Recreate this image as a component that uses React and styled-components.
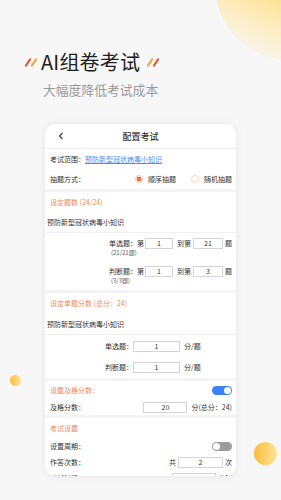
import React from "react";
import styled, { createGlobalStyle } from "styled-components";

const GlobalStyle = createGlobalStyle`
  html, body {
    margin: 0;
    padding: 0;
    background: #f7f7f7;
  }
  body {
    font-family: "Noto Sans CJK SC", "Noto Sans", sans-serif;
    color: #333;
  }
  * {
    box-sizing: border-box;
  }
`;

const ORANGE = "#f08a5d";

const Slashes = ({ colors }) => (
  <svg width="14" height="10" viewBox="0 0 14 10">
    <line x1="2" y1="8.5" x2="6" y2="2.5" stroke={colors[0]} strokeWidth="2.2" strokeLinecap="round" />
    <line x1="8" y1="8.5" x2="12" y2="2.5" stroke={colors[1]} strokeWidth="2.2" strokeLinecap="round" />
  </svg>
);

const Chevron = () => (
  <svg width="6" height="8" viewBox="0 0 6 8">
    <polyline points="4.5,1 1.5,4 4.5,7" fill="none" stroke="#333" strokeWidth="1.1" />
  </svg>
);

const App = () => {
  return (
    <Page>
      <GlobalStyle />
      {/* 装饰圆 */}
      <BigBlob />
      <Dot $size={11} $x={10} $y={375} />
      <Dot $size={23} $x={254} $y={442} />

      {/* 标题 */}
      <TitleRow>
        <Slashes colors={["#ef5030", "#f8a13a"]} />
        <Title>AI组卷考试</Title>
        <Slashes colors={["#f8a13a", "#ef5030"]} />
      </TitleRow>
      <Subtitle>大幅度降低考试成本</Subtitle>

      {/* 手机卡片 */}
      <Card>
        <Header>
          <BackBtn>
            <Chevron />
          </BackBtn>
          <HeaderTitle>配置考试</HeaderTitle>
          <span />
        </Header>

        <InfoRow>
          考试范围：<LinkText>预防新型冠状病毒小知识</LinkText>
        </InfoRow>
        <InfoRow>
          抽题方式：
          <RadioGroup>
            <RadioItem>
              <Radio $checked />
              顺序抽题
            </RadioItem>
            <RadioItem>
              <Radio />
              随机抽题
            </RadioItem>
          </RadioGroup>
        </InfoRow>

        {/* 设定题数 */}
        <Section>
          <SectionTitle>设定题数 (24/24)</SectionTitle>
          <DescRow>预防新型冠状病毒小知识</DescRow>
          <QuestionList>
            <QuestionRow>
              <LabelBlock>
                <MainLabel>单选题：第</MainLabel>
                <SubLabel>(21/21题)</SubLabel>
              </LabelBlock>
              <Field $w={28}>1</Field>
              <Gap $ml={4} $mr={2}>到第</Gap>
              <Field $w={30}>21</Field>
              <Gap $ml={2}>题</Gap>
            </QuestionRow>
            <QuestionRow>
              <LabelBlock>
                <MainLabel>判断题：第</MainLabel>
                <SubLabel>(3/3题)</SubLabel>
              </LabelBlock>
              <Field $w={28}>1</Field>
              <Gap $ml={4} $mr={2}>到第</Gap>
              <Field $w={30}>3</Field>
              <Gap $ml={2}>题</Gap>
            </QuestionRow>
          </QuestionList>
        </Section>

        {/* 设定单题分数 */}
        <Section>
          <SectionTitle>设定单题分数 (总分：24)</SectionTitle>
          <DescRow $h={21}>预防新型冠状病毒小知识</DescRow>
          <ScoreList>
            <ScoreRow>
              <ScoreLabel>单选题：</ScoreLabel>
              <Field $w={47}>1</Field>
              <Unit $ml={4}>分/题</Unit>
            </ScoreRow>
            <ScoreRow>
              <ScoreLabel>判断题：</ScoreLabel>
              <Field $w={47}>1</Field>
              <Unit $ml={4}>分/题</Unit>
            </ScoreRow>
          </ScoreList>
        </Section>

        {/* 及格分数 */}
        <Section>
          <SectionTitle $h={18}>
            设置及格分数：
            <Toggle $on />
          </SectionTitle>
          <SettingRow>
            及格分数：
            <Push>
              <Field $w={44}>20</Field>
              <Unit $ml={4}>分(总分：24)</Unit>
            </Push>
          </SettingRow>
        </Section>

        {/* 考试设置 */}
        <Section>
          <SectionTitle>考试设置</SectionTitle>
          <SettingRow>
            设置周期：
            <Toggle />
          </SettingRow>
          <SettingRow>
            作答次数：
            <Push>
              <Unit $mr={2}>共</Unit>
              <Field $w={45}>2</Field>
              <Unit $ml={2}>次</Unit>
            </Push>
          </SettingRow>
          <SettingRow>
            考试时间：
            <Push>
              <Field $w={44}>60</Field>
              <Unit $ml={2}>分钟</Unit>
            </Push>
          </SettingRow>
        </Section>
      </Card>
    </Page>
  );
};

const Page = styled.div`
  position: relative;
  width: 281px;
  height: 500px;
  overflow: hidden;
  background: #f7f7f7;
  padding-top: 50px;
`;

const BigBlob = styled.div`
  position: absolute;
  left: 215px;
  top: -90px;
  width: 150px;
  height: 150px;
  border-radius: 50%;
  background: linear-gradient(205deg, #fcd050 0%, #fdd668 45%, #fde7a8 65%, #faf3e3 85%, #f8f6f2 100%);
`;

const Dot = styled.div`
  position: absolute;
  left: ${(p) => p.$x}px;
  top: ${(p) => p.$y}px;
  width: ${(p) => p.$size}px;
  height: ${(p) => p.$size}px;
  border-radius: 50%;
  background: linear-gradient(90deg, #fbbd3c, #fde39a);
`;

const TitleRow = styled.div`
  position: relative;
  display: flex;
  align-items: center;
  height: 24px;
  padding-left: 24px;
  gap: 3px;
  & > svg:last-child {
    margin-left: 3px;
  }
`;

const Title = styled.div`
  font-size: 20px;
  line-height: 24px;
  color: #222;
  letter-spacing: 0.2px;
`;

const Subtitle = styled.div`
  position: relative;
  margin-top: 8px;
  padding-left: 43px;
  font-size: 12.8px;
  line-height: 16px;
  color: #9a9a9a;
`;

const Card = styled.div`
  position: relative;
  width: 191px;
  height: 352px;
  margin: 26px auto 0;
  background: #fff;
  border-radius: 10px;
  overflow: hidden;
  box-shadow: 0 0 8px rgba(0, 0, 0, 0.07);
  font-size: 7px;
  color: #333;
`;

const Header = styled.div`
  display: grid;
  grid-template-columns: 30px 1fr 30px;
  align-items: center;
  height: 25px;
  border-bottom: 1px solid #efefef;
`;

const BackBtn = styled.div`
  display: flex;
  padding-left: 13px;
`;

const HeaderTitle = styled.div`
  text-align: center;
  font-size: 9px;
  font-weight: 500;
  color: #333;
`;

const InfoRow = styled.div`
  display: flex;
  align-items: center;
  height: 20px;
  padding: 0 4px 0 5px;
  line-height: 10px;
`;

const LinkText = styled.span`
  color: #4a8ef2;
  text-decoration: underline;
  text-underline-offset: 1px;
`;

const RadioGroup = styled.div`
  display: flex;
  margin-left: auto;
  gap: 15px;
`;

const RadioItem = styled.div`
  display: flex;
  align-items: center;
  gap: 5px;
`;

const Radio = styled.span`
  width: 8px;
  height: 8px;
  border-radius: 50%;
  border: 1px solid ${(p) => (p.$checked ? "#f9c4ad" : "#f7d3c2")};
  background: ${(p) =>
    p.$checked ? "radial-gradient(circle, #f2703e 0 2.3px, #fff 2.6px)" : "#fff"};
`;

const Section = styled.div`
  border-top: 3px solid #f4f4f4;
`;

const SectionTitle = styled.div`
  display: flex;
  align-items: center;
  justify-content: space-between;
  height: ${(p) => p.$h || 20}px;
  padding: 0 4px 0 5px;
  color: ${ORANGE};
  line-height: 10px;
`;

const DescRow = styled.div`
  display: flex;
  align-items: center;
  height: ${(p) => p.$h || 20}px;
  padding-left: 2px;
  border-bottom: 1px solid #f0f0f0;
  line-height: 10px;
  box-sizing: content-box;
`;

const QuestionList = styled.div`
  display: flex;
  flex-direction: column;
  align-items: flex-end;
  gap: 9px;
  padding: 5px 4px 5px 0;
`;

const QuestionRow = styled.div`
  display: flex;
  align-items: flex-start;
`;

const LabelBlock = styled.div`
  display: flex;
  flex-direction: column;
  margin-right: 1px;
`;

const MainLabel = styled.div`
  height: 11px;
  line-height: 11px;
  word-spacing: 2px;
`;

const SubLabel = styled.div`
  height: 8px;
  line-height: 8px;
  font-size: 6px;
  color: #555;
  padding-left: 2px;
`;

const Field = styled.div`
  width: ${(p) => p.$w}px;
  height: 11px;
  border: 1px solid #d4d4d4;
  background: #fff;
  text-align: center;
  line-height: 9px;
  font-size: 7px;
  color: #333;
`;

const Gap = styled.span`
  height: 11px;
  line-height: 11px;
  margin-left: ${(p) => p.$ml || 0}px;
  margin-right: ${(p) => p.$mr || 0}px;
`;

const ScoreList = styled.div`
  display: flex;
  flex-direction: column;
  gap: 9px;
  padding: 5px 0 5px;
`;

const ScoreRow = styled.div`
  display: flex;
  align-items: center;
  height: 12px;
`;

const ScoreLabel = styled.span`
  width: 88px;
  text-align: right;
`;

const Unit = styled.span`
  margin-left: ${(p) => p.$ml || 0}px;
  margin-right: ${(p) => p.$mr || 0}px;
  line-height: 10px;
`;

const SettingRow = styled.div`
  display: flex;
  align-items: center;
  height: 16px;
  padding: 0 4px 0 5px;
  line-height: 10px;
`;

const Push = styled.div`
  display: flex;
  align-items: center;
  margin-left: auto;
`;

const Toggle = styled.span`
  position: relative;
  width: 20px;
  height: 9px;
  margin-left: auto;
  border-radius: 5px;
  background: ${(p) => (p.$on ? "#3b82f6" : "#9b9b9b")};
  &::after {
    content: "";
    position: absolute;
    top: 1px;
    left: ${(p) => (p.$on ? "12px" : "1px")};
    width: 7px;
    height: 7px;
    border-radius: 50%;
    background: #fff;
  }
`;

export default App;
